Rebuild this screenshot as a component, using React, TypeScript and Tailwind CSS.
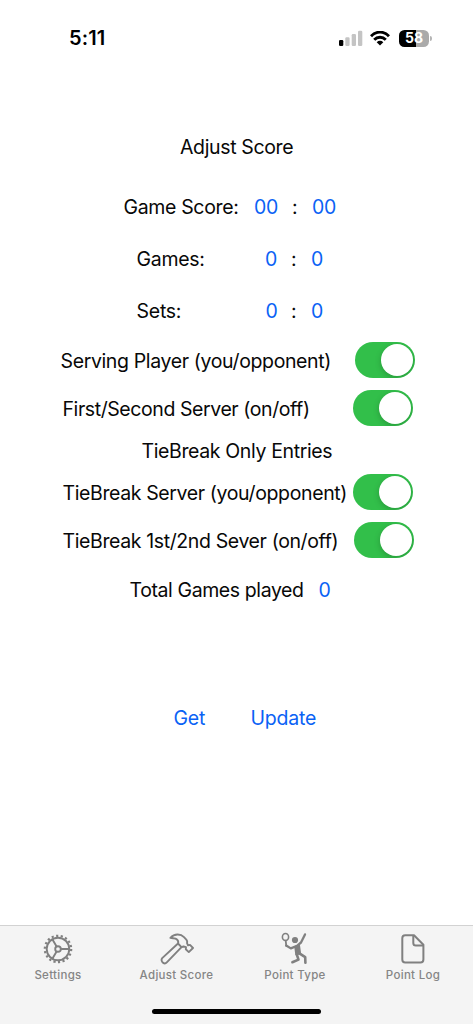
import React from "react";

function Toggle() {
  return (
    <button
      role="switch"
      aria-checked="true"
      className="flex h-9 w-[60px] shrink-0 items-center justify-end overflow-hidden rounded-full bg-[#32bf4a] pr-0.5"
    >
      <span className="h-8 w-8 rounded-full bg-white shadow-[0_2px_6px_rgba(0,0,0,0.2)]" />
    </button>
  );
}

type ScoreProps = { label: string; value: string; pad: string; label_w: string; gap: string; tail: string; tracking: string };

function ScoreRow({ label, value, pad, label_w, gap, tail, tracking }: ScoreProps) {
  return (
    <div className={`flex h-10 items-center ${pad}`}>
      <span className={`${label_w} ${tracking}`}>{label}</span>
      <span className={`${gap} text-[#0a62f5]`}>{value}</span>
      <span className={tail}>:</span>
      <span className="tracking-[-0.3px] text-[#0a62f5]">{value}</span>
    </div>
  );
}

function SignalIcon() {
  return (
    <svg width="24" height="16" viewBox="0 0 24 16">
      <rect x="0" y="10" width="4.3" height="6" rx="1.2" fill="#000" />
      <g fill="#c4c4c4">
        <rect x="6.3" y="7.3" width="4.3" height="8.7" rx="1.2" />
        <rect x="12.7" y="4" width="4.3" height="12" rx="1.2" />
        <rect x="19" y="0.8" width="4.3" height="15.2" rx="1.2" />
      </g>
    </svg>
  );
}

function WifiIcon() {
  return (
    <svg width="20" height="15" viewBox="0 0 20 15" fill="none" stroke="#000" strokeWidth="2.9">
      <path d="M1 5.2C6-.2 14-.2 19 5.2" />
      <path d="M4.2 8.7C7.4 5.5 12.6 5.5 15.8 8.7" />
      <path d="M6.7 11.2C8.6 9.4 11.4 9.4 13.3 11.2L10 14.6Z" fill="#000" stroke="none" />
    </svg>
  );
}

function GearIcon() {
  return (
    <svg width="30" height="30" viewBox="0 0 30 30" fill="none" stroke="#808080" strokeWidth="1.9">
      <circle cx="15" cy="15" r="11.3" />
      <circle cx="15" cy="15" r="13.2" strokeWidth="2.2" strokeDasharray="2.2 2.407" />
      <circle cx="15" cy="15" r="2.8" />
      <path d="M17.8 15H26.5M13.6 12.6 9.2 5M13.6 17.4 9.2 25" />
    </svg>
  );
}

function HammerIcon() {
  return (
    <svg width="34" height="32" viewBox="0 0 34 32" fill="none" stroke="#808080" strokeWidth="1.9" strokeLinejoin="round" strokeLinecap="round">
      <path d="M18 10.5 2.2 25.1Q.9 26.8 2.2 28.8L3.2 29.9Q5.1 31.2 6.8 29.4L21.5 14.2" />
      <path d="M10.4 4.8C14.5.6 20.5.5 24 4.2L26.3 6.6Q27.6 8.2 27 10L28 12.4 30 11.9 33 15 28.8 19.1 25.8 16.2 26 14.2 23.5 13.5 21.5 14.2 18 10.5Q18.8 8.2 17 6.5C15.4 4.8 12.8 5.5 10.4 4.8Z" />
    </svg>
  );
}

function TennisIcon() {
  return (
    <svg width="28" height="34" viewBox="0 0 28 34" fill="none" stroke="#808080" strokeLinecap="round" strokeLinejoin="round">
      <ellipse cx="4.5" cy="5" rx="3.1" ry="3.5" strokeWidth="1.6" />
      <path d="M4.7 8.7 5.3 14" strokeWidth="1.8" />
      <circle cx="14" cy="8" r="3.1" fill="#808080" stroke="none" />
      <path d="M5.2 13.5 9.8 16.4 16 13.9 20 10.5 24 2.4" strokeWidth="2.3" />
      <path d="M14 14.7 18.3 13.5 19.4 21.8 15 22.6Z" fill="#808080" strokeWidth="1.5" />
      <path d="M15.8 22.5 17.5 27.6 11.4 30.2M18.8 21.7 24.2 25.2 24.4 30.8" strokeWidth="2.6" />
    </svg>
  );
}

function FileIcon() {
  return (
    <svg width="24" height="30" viewBox="0 0 24 30" fill="none" stroke="#808080" strokeWidth="2" strokeLinejoin="round">
      <path d="M4.2 1.3H13L22.4 10.7V25.5Q22.4 28.4 19.5 28.4H4.2Q1.3 28.4 1.3 25.5V4.2Q1.3 1.3 4.2 1.3Z" />
      <path d="M12.3 1.3V9Q12.3 11.5 14.8 11.5H22.4" />
    </svg>
  );
}

function Tab({ icon, label, width }: { icon: React.ReactNode; label: string; width: string }) {
  return (
    <div className={`flex flex-col items-center ${width}`}>
      <div className="flex h-[42px] items-center justify-center pt-[3px]">{icon}</div>
      <span className="text-[11.5px] leading-[14px] font-medium tracking-[0.3px] whitespace-nowrap text-[#858585]">{label}</span>
    </div>
  );
}

export default function App() {
  return (
    <main className="flex h-[1024px] w-[473px] flex-col overflow-hidden bg-white font-['Inter','Liberation_Sans',sans-serif] text-[19.5px] leading-6 whitespace-nowrap text-[#080808]">
      <header className="flex h-[76px] shrink-0 items-center pl-[69px] text-black">
        <span className="w-[270px] text-[20px] font-semibold tracking-[0.15px]">5:11</span>
        <SignalIcon />
        <span className="ml-[7px]"><WifiIcon /></span>
        <span className="ml-[9px] flex h-[17px] w-[30px] items-center justify-center rounded-[5.5px] bg-[linear-gradient(90deg,#000_56%,#aaa_56%)] text-[14px] font-bold text-white">58</span>
        <span className="ml-px h-[5px] w-[2px] rounded-r-full bg-[#b5b5b5]" />
      </header>
      <h1 className="mt-[51px] flex h-10 items-center pl-[180px] font-normal tracking-[-0.36px]">Adjust Score</h1>
      <section className="mt-5 flex flex-col gap-3">
        <ScoreRow label="Game Score:" value="00" pad="pl-[123.5px]" label_w="w-[130.5px]" gap="w-[38px] tracking-[-0.3px]" tail="w-[20px]" tracking="tracking-[-0.35px]" />
        <ScoreRow label="Games:" value="0" pad="pl-[136.5px]" label_w="w-[128.5px]" gap="w-[26px]" tail="w-[20px]" tracking="tracking-[-0.3px]" />
        <ScoreRow label="Sets:" value="0" pad="pl-[136.5px]" label_w="w-[129px]" gap="w-[25.5px]" tail="w-[20px]" tracking="tracking-[-0.25px]" />
      </section>
      <section className="mt-[11px] flex flex-col gap-3">
        <div className="flex h-9 items-center pl-[60.5px]">
          <span className="w-[294.5px] pt-px tracking-[-0.37px]">Serving Player (you/opponent)</span>
          <Toggle />
        </div>
        <div className="flex h-9 items-center pl-[62.5px]">
          <span className="w-[290.5px] pt-px tracking-[-0.42px]">First/Second Server (on/off)</span>
          <Toggle />
        </div>
      </section>
      <h2 className="mt-[7px] flex h-9 items-center pl-[141.5px] tracking-[-0.37px]">TieBreak Only Entries</h2>
      <section className="mt-[5px] flex flex-col gap-3">
        <div className="flex h-9 items-center pl-[62.5px]">
          <span className="w-[290.5px] pt-px tracking-[-0.38px]">TieBreak Server (you/opponent)</span>
          <Toggle />
        </div>
        <div className="flex h-9 items-center pl-[62.5px]">
          <span className="w-[291.5px] pt-px tracking-[-0.38px]">TieBreak 1st/2nd Sever (on/off)</span>
          <Toggle />
        </div>
      </section>
      <div className="mt-[14px] flex h-9 items-center pl-[129.5px]">
        <span className="w-[189px] tracking-[-0.4px]">Total Games played</span>
        <span className="text-[#0a62f5]">0</span>
      </div>
      <div className="mt-[92px] flex h-9 items-center pl-[173.5px] text-[#0a62f5]">
        <button className="w-[77px] text-left tracking-[-0.2px]">Get</button>
        <button className="text-left tracking-[-0.2px]">Update</button>
      </div>
      <footer className="mt-auto flex h-[99px] shrink-0 flex-col border-t border-[#d2d2d2] bg-[#f4f4f4]">
        <nav className="flex">
          <Tab icon={<GearIcon />} label="Settings" width="w-[116px]" />
          <Tab icon={<HammerIcon />} label="Adjust Score" width="w-[121px]" />
          <Tab icon={<TennisIcon />} label="Point Type" width="w-[116px]" />
          <Tab icon={<FileIcon />} label="Point Log" width="w-[120px]" />
        </nav>
        <div className="mt-auto mb-[10px] ml-[152px] h-[5.5px] w-[169px] rounded-full bg-black" />
      </footer>
    </main>
  );
}
